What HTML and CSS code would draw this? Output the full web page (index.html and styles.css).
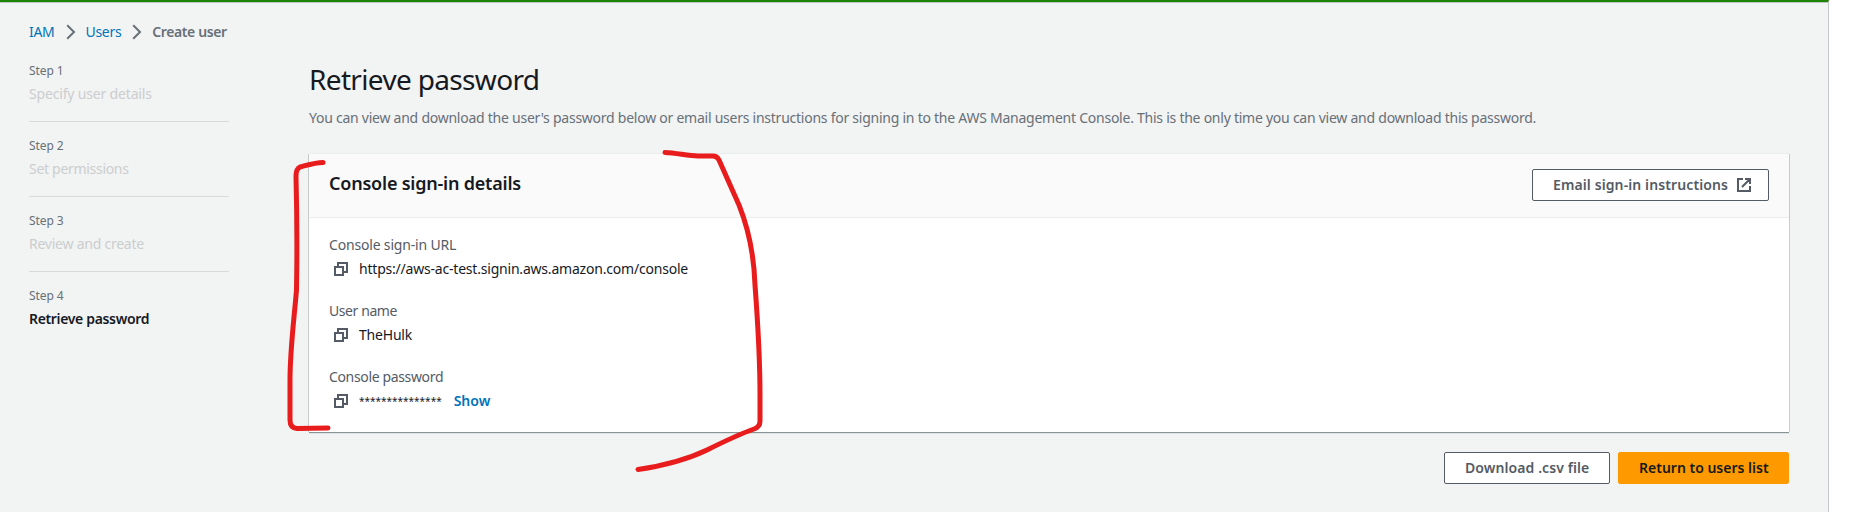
FILE: index.html
```
<!DOCTYPE html>
<html lang="en">
<head>
<meta charset="utf-8">
<title>Create user</title>
<link rel="stylesheet" href="styles.css">
</head>
<body>
<div class="page">
  <nav class="crumbs">
    <a>IAM</a>
    <svg class="chev" viewBox="0 0 10 16"><path d="M1.200 1.200 8 8l-6.800 6.800"/></svg>
    <a>Users</a>
    <svg class="chev" viewBox="0 0 10 16"><path d="M1.200 1.200 8 8l-6.800 6.800"/></svg>
    <b>Create user</b>
  </nav>
  <div class="columns">
    <ol class="steps">
      <li><small>Step 1</small><span class="specify">Specify user details</span></li>
      <li><small>Step 2</small><span class="permissions">Set permissions</span></li>
      <li><small>Step 3</small><span class="review">Review and create</span></li>
      <li class="active"><small>Step 4</small><span class="retrieve">Retrieve password</span></li>
    </ol>
    <main class="main">
      <h1>Retrieve password</h1>
      <p class="desc">You can view and download the user's password below or email users instructions for signing in to the AWS Management Console. This is the only time you can view and download this password.</p>
      <section class="card">
        <header class="card-head">
          <h2>Console sign-in details</h2>
          <button class="btn email"><span>Email sign-in instructions</span>
            <svg class="ext" viewBox="0 0 14 14"><path d="M6 1H1v12h12V8M8 1h5v5M12.500 1.500 5 9"/></svg>
          </button>
        </header>
        <div class="fields">
          <div class="field">
            <div class="label">Console sign-in URL</div>
            <div class="value"><svg class="copy" viewBox="0 0 14 14"><path d="M1 5h8v8H1zM4 4V1h9v9h-3"/></svg><span class="url">https://aws-ac-test.signin.aws.amazon.com/console</span></div>
          </div>
          <div class="field">
            <div class="label label-user">User name</div>
            <div class="value"><svg class="copy" viewBox="0 0 14 14"><path d="M1 5h8v8H1zM4 4V1h9v9h-3"/></svg><span class="name">TheHulk</span></div>
          </div>
          <div class="field">
            <div class="label label-password">Console password</div>
            <div class="value"><svg class="copy" viewBox="0 0 14 14"><path d="M1 5h8v8H1zM4 4V1h9v9h-3"/></svg><span class="stars">***************</span><a class="show">Show</a></div>
          </div>
        </div>
      </section>
      <div class="actions">
        <button class="btn csv">Download .csv file</button>
        <button class="btn primary">Return to users list</button>
      </div>
    </main>
  </div>
  <svg class="marker" viewBox="0 0 1862 512">
    <path d="M323 162.500C315 162.500 306 165.500 300 167Q296 169 296 176C297 215 297 262 296.500 290C294 320 290 350 290 380V420Q290 428 297 428.500L328 428"/>
    <path d="M665 152.500C677 153 688 156 698 156H713Q717 156 719 160L739 205C749 230 754 255 755 285C758 325 760 365 760 395V421Q760 427 754 429C740 434 725 441 707 450C686 460 662 466 638 469.500"/>
  </svg>
</div>
</body>
</html>
```
FILE: styles.css
```
* { box-sizing: border-box; }
body {
  margin: 0;
  background: #fff;
  font: 14px/22px "Noto Sans", "Open Sans", sans-serif;
  color: #16191f;
}
.page {
  position: relative;
  width: 1829px;
  height: 512px;
  padding: 19px 39px 0 29px;
  background: #f2f3f3;
  border-top: 2px solid #1d8102;
  border-right: 1px solid #c3c8ca;
  box-shadow: inset 0 1px #c0c5c6;
  overflow: hidden;
}
svg { fill: none; stroke: #545b64; flex: none; }
.crumbs { display: flex; align-items: center; height: 22px; color: #687078; letter-spacing: -0.3px; }
.crumbs a, .show { color: #0073bb; }
.crumbs b { font-weight: 600; letter-spacing: -0.4px; }
.chev { width: 10px; height: 16px; margin: 0 10px 0 11px; stroke: #687078; stroke-width: 2; }
.columns { display: flex; gap: 80px; }
.steps { width: 200px; margin: 17px 0 0; padding: 0; list-style: none; }
.steps li { height: 75px; display: flex; flex-direction: column; align-items: flex-start; color: #cbcecf; }
.steps li:not(:last-child)::after { content: ""; width: 200px; height: 1px; margin-top: 16px; background: #d5dbdb; }
.steps small { font-size: 12px; line-height: 21px; margin-bottom: 2px; color: #687078; letter-spacing: -0.09px; }
.steps .active { color: #16191f; font-weight: 600; }
.steps .active small { font-weight: 400; }
.specify { letter-spacing: -0.17px; }
.permissions { letter-spacing: -0.3px; }
.review { letter-spacing: -0.24px; }
.retrieve { letter-spacing: -0.34px; }
.main { flex: 1; padding-top: 18px; }
h1 { margin: 0; font-size: 28px; line-height: 36px; font-weight: 400; letter-spacing: -0.66px; }
.desc { margin: 10px 0 25px; color: #687078; white-space: nowrap; letter-spacing: -0.248px; }
.card {
  height: 278px;
  background: #fff;
  box-shadow: 0 1px #879596, 0 -1px #eaeded, 1px 0 #c6cccc, -1px 0 #c6cccc, 0 2px #dfe3e3;
}
.card-head {
  height: 64px;
  padding: 0 20px 1px;
  display: flex;
  justify-content: space-between;
  align-items: center;
  background: #fafafa;
  border-bottom: 1px solid #eaeded;
}
h2 { margin: 0 0 4px; font-size: 18px; line-height: 22px; font-weight: 600; letter-spacing: -0.21px; }
.btn {
  height: 32px;
  display: flex;
  align-items: center;
  padding: 0 20px 1px;
  font: 600 14px/20px "Noto Sans", "Open Sans", sans-serif;
  color: #545b64;
  background: #fff;
  border: 1px solid #545b64;
  border-radius: 2px;
  white-space: nowrap;
}
.email { width: 237px; padding: 0 17px 0 20px; justify-content: space-between; letter-spacing: 0.11px; }
.ext, .copy { width: 14px; height: 14px; stroke-width: 2; }
.fields { padding: 16px 20px; }
.field { height: 66px; }
.label { color: #545b64; height: 24px; letter-spacing: -0.18px; }
.label-user { letter-spacing: -0.417px; }
.label-password { letter-spacing: -0.35px; }
.value { display: flex; align-items: center; height: 22px; }
.copy { margin: 0 11px 0 5px; }
.url { letter-spacing: -0.205px; }
.name { letter-spacing: -0.2px; }
.stars { font-size: 10px; }
.show { font-weight: 600; margin-left: 12px; }
.actions { display: flex; justify-content: flex-end; gap: 8px; margin-top: 20px; }
.csv { width: 166px; letter-spacing: 0.09px; }
.primary { width: 171px; background: #ff9900; border-color: #ff9900; color: #16191f; }
.marker { position: absolute; left: 0; top: -2px; width: 1862px; height: 512px; stroke: #e81c1c; stroke-width: 5; stroke-linecap: round; stroke-linejoin: round; }
```
